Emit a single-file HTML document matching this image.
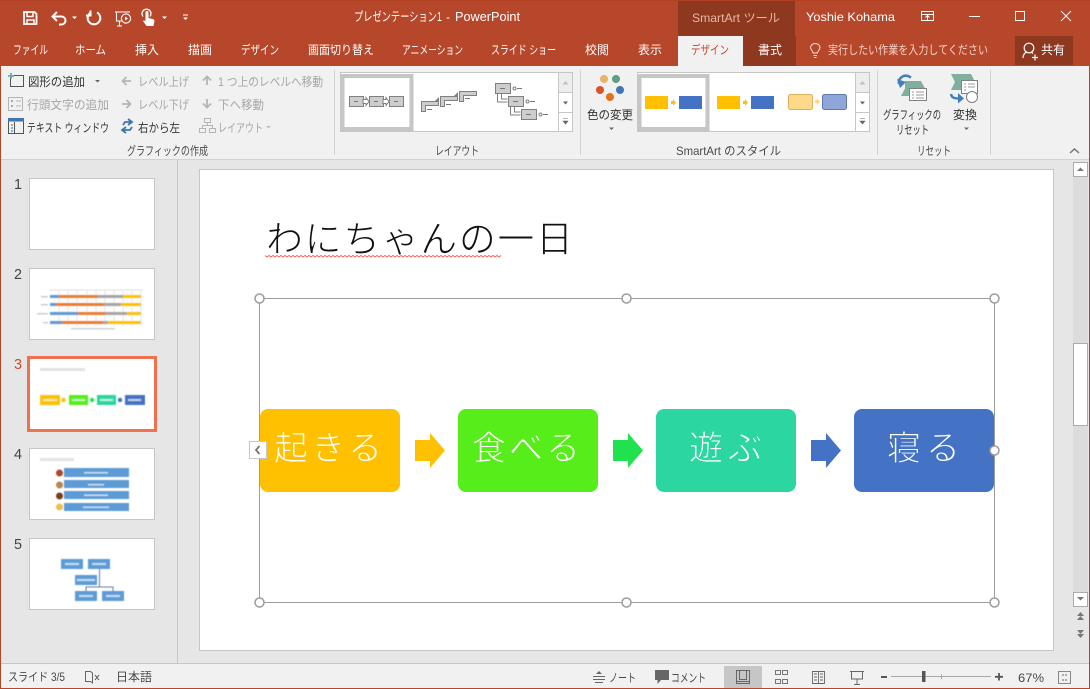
<!DOCTYPE html>
<html lang="ja"><head><meta charset="utf-8"><title>PowerPoint</title>
<style>
html,body{margin:0;padding:0;background:#e6e6e6;width:1090px;height:689px;overflow:hidden}
svg{display:block}
text{font-family:"Liberation Sans","Noto Sans CJK JP",sans-serif;font-size:12px;fill:#4a4a4a;white-space:pre}
.w text,text.w{fill:#fff}
.g text,text.g{fill:#a6a6a6}
.d text,text.d{fill:#333}
</style></head><body>
<svg width="1090" height="689" viewBox="0 0 1090 689" xmlns="http://www.w3.org/2000/svg">
<defs>
<filter id="b" x="-5%" y="-5%" width="110%" height="110%"><feGaussianBlur stdDeviation="0.45"/></filter>
<clipPath id="sq"><rect x="265" y="250" width="236" height="12"/></clipPath>
</defs>
<!-- backgrounds -->
<rect width="1090" height="689" fill="#B7472A"/>
<rect width="1090" height="1" fill="#B13F22"/>
<rect x="1" y="66" width="1088" height="93" fill="#F1F1F1"/>
<rect x="1" y="159" width="1088" height="1" fill="#D2D2D2"/>
<rect x="1" y="160" width="1088" height="504" fill="#E6E6E6"/>
<rect x="1" y="664" width="1088" height="24" fill="#F1F1F1"/>
<rect x="1" y="663" width="1088" height="1" fill="#C6C6C6"/>
<rect x="177" y="160" width="1" height="503" fill="#C6C6C6"/>
<!-- tool tabs -->
<rect x="678" y="1" width="117" height="35" fill="#8F3820"/>
<rect x="743" y="36" width="53" height="30" fill="#8F3820"/>
<rect x="678" y="36" width="65" height="30" fill="#F1F1F1"/>
<rect x="1015" y="36" width="58" height="29" fill="#8F3820"/>
<!-- QAT icons -->
<g fill="none" stroke="#fff" stroke-width="1.6">
<path d="M24 12h10.500l2 2v10h-12.500z" stroke-width="1.800"/>
<path d="M27 12.500v4h6v-4M27 24v-4h7v4" stroke-width="1.500"/>
<path d="M54 16.500h7.500a4 4 0 0 1 0 8h-2.500M57 12l-4.500 4.500 4.500 4.500" stroke-width="2"/>
<path d="M97 12.500a6.300 6.300 0 1 1-6 0M90.500 10.500v5h-4.500" stroke-width="2"/>
<path d="M115 12h15M116.500 12v9h6M122 26h-5M119.500 21v5" stroke-width="1.100"/>
<circle cx="126" cy="18.500" r="4.600" stroke-width="1.100"/>
<path d="M143 16.500a4.500 4.500 0 1 1 7 0" stroke-width="1.300"/>
</g>
<path d="M125 16.500l3 2-3 2z" fill="#fff"/>
<path d="M145.500 12.500a1.500 1.500 0 0 1 3 0v5.500l5 1.200 1 1.300-1 5.500h-7l-3.500-5 1 -.8 1.500 1z" fill="#fff"/>
<path d="M72 16.500h5l-2.500 2.500zM162 16.500h5l-2.500 2.500zM183 17.500h5l-2.500 2.500z" fill="#fff"/>
<rect x="183" y="14.500" width="5" height="1" fill="#fff"/>
<!-- title -->
<g class="w">
<text x="354" y="21" textLength="88" lengthAdjust="spacingAndGlyphs" style="font-size:12.500px">プレゼンテーション1</text>
<text x="446" y="21" style="font-size:12px">-</text>
<text x="455" y="21" textLength="65" lengthAdjust="spacingAndGlyphs" style="font-size:12.500px">PowerPoint</text>
<text x="806" y="21" textLength="89" lengthAdjust="spacingAndGlyphs">Yoshie Kohama</text>
</g>
<text x="692" y="22" textLength="88" lengthAdjust="spacingAndGlyphs" style="fill:#E9B7A6">SmartArt ツール</text>
<g fill="none" stroke="#fff" stroke-width="1">
<path d="M921.500 11.500h12v9h-12zM921.500 14.500h12M927.500 20v-4M925.500 17.500l2-2 2 2"/>
<path d="M969 16.500h11"/>
<path d="M1015.500 11.500h9v9h-9z"/>
<path d="M1061 11l10 10M1071 11l-10 10"/>
</g>
<!-- tabs -->
<g class="w">
<text x="13" y="54" textLength="35" lengthAdjust="spacingAndGlyphs">ファイル</text>
<text x="75" y="54" textLength="31" lengthAdjust="spacingAndGlyphs">ホーム</text>
<text x="135" y="54" textLength="24" lengthAdjust="spacingAndGlyphs">挿入</text>
<text x="188" y="54" textLength="24" lengthAdjust="spacingAndGlyphs">描画</text>
<text x="241" y="54" textLength="38" lengthAdjust="spacingAndGlyphs">デザイン</text>
<text x="308" y="54" textLength="66" lengthAdjust="spacingAndGlyphs">画面切り替え</text>
<text x="402" y="54" textLength="61" lengthAdjust="spacingAndGlyphs">アニメーション</text>
<text x="491" y="54" textLength="65" lengthAdjust="spacingAndGlyphs">スライド ショー</text>
<text x="585" y="54" textLength="24" lengthAdjust="spacingAndGlyphs">校閲</text>
<text x="638" y="54" textLength="24" lengthAdjust="spacingAndGlyphs">表示</text>
<text x="758" y="54" textLength="24" lengthAdjust="spacingAndGlyphs">書式</text>
<text x="1041" y="54" textLength="24" lengthAdjust="spacingAndGlyphs">共有</text>
</g>
<text x="691" y="54" textLength="38" lengthAdjust="spacingAndGlyphs" style="fill:#C8442A">デザイン</text>
<text x="828" y="54" textLength="160" lengthAdjust="spacingAndGlyphs" style="fill:#F3D3C8">実行したい作業を入力してください</text>
<g fill="none" stroke="#F7E3DB" stroke-width="1">
<path d="M813 53c0-2-2.500-3-2.500-6a5 5 0 0 1 9.500 0c0 3-2.500 4-2.500 6zM813.500 55.500h3.500M814 57.500h2.500"/>
</g>
<g fill="none" stroke="#fff" stroke-width="1.200">
<circle cx="1029" cy="48" r="4.800"/>
<path d="M1023 58c0-3.500 2-5.500 4-6M1031 52l2 1.500M1032 57.500h6M1035 54.500v6"/>
</g>
<!-- ribbon separators -->
<g fill="#D2D2D2">
<rect x="334" y="70" width="1" height="85"/><rect x="580" y="70" width="1" height="85"/>
<rect x="877" y="70" width="1" height="85"/><rect x="990" y="70" width="1" height="85"/>
</g>
<!-- group 1 -->
<g fill="none">
<path d="M10.500 77.500v9h13v-11h-10" stroke="#555"/>
<path d="M8 76h6M11 73v6" stroke="#5FA58F" stroke-width="1.600"/>
<path d="M8.500 97.500h14v13h-14z" stroke="#B5B5B5"/>
<path d="M16 101h5M16 106h5" stroke="#B5B5B5"/>
<path d="M11 101h2M11 106h2" stroke="#A8A8A8" stroke-width="2"/>
<path d="M8.500 120.500h15v13h-15z" stroke="#555"/>
<path d="M11 125h2M11 128h2M11 131h2" stroke="#2B6CA8"/>
<path d="M14.500 122v11" stroke="#555"/>
</g>
<rect x="8" y="118" width="16" height="3.500" fill="#3F75AE"/>
<text class="d" x="28" y="86" textLength="57" lengthAdjust="spacingAndGlyphs">図形の追加</text>
<path d="M95 80h5l-2.500 2.500z" fill="#666"/>
<text class="g" x="27" y="109" textLength="82" lengthAdjust="spacingAndGlyphs">行頭文字の追加</text>
<text class="d" x="27" y="132" textLength="82" lengthAdjust="spacingAndGlyphs">テキスト ウィンドウ</text>
<g class="g">
<text x="138" y="86" textLength="51" lengthAdjust="spacingAndGlyphs">レベル上げ</text>
<text x="138" y="109" textLength="51" lengthAdjust="spacingAndGlyphs">レベル下げ</text>
<text x="218" y="86" textLength="105" lengthAdjust="spacingAndGlyphs">1 つ上のレベルへ移動</text>
<text x="218" y="109" textLength="46" lengthAdjust="spacingAndGlyphs">下へ移動</text>
<text x="218" y="132" textLength="45" lengthAdjust="spacingAndGlyphs">レイアウト</text>
</g>
<text class="d" x="138" y="132" textLength="42" lengthAdjust="spacingAndGlyphs">右から左</text>
<g fill="none" stroke="#B5B5B5" stroke-width="1.800">
<path d="M131 81h-8M126.500 77l-4 4 4 4"/>
<path d="M122 104h8M126.500 100l4 4-4 4"/>
<path d="M207 85v-8M203 80.500l4-4 4 4"/>
<path d="M207 99v8M203 103.500l4 4 4-4"/>
</g>
<g fill="none" stroke="#3F75AE" stroke-width="2">
<path d="M132 122h-7l-2 3M128 119l4 3-4 3" stroke-width="1.800"/>
<path d="M123 130h7l2-3M126 127l-4 3 4 3" stroke-width="1.800"/>
</g>
<g fill="none" stroke="#B5B5B5">
<path d="M204.500 118.500h6v4h-6zM199.500 128.500h6v4h-6zM209.500 128.500h6v4h-6zM207.500 122.500v3M202.500 128v-2.500h10v2.500"/>
</g>
<path d="M266 126h5l-2.500 2.500z" fill="#C0C0C0"/>
<text x="127" y="155" textLength="81" lengthAdjust="spacingAndGlyphs">グラフィックの作成</text>
<!-- layout gallery -->
<rect x="340.500" y="72.500" width="232" height="59" fill="#fff" stroke="#C6C6C6"/>
<rect x="342.500" y="76" width="69" height="53" fill="#fff" stroke="#C6C6C6" stroke-width="4"/>
<g fill="#CDCDCD" stroke="#808080">
<rect x="349.500" y="96.500" width="14" height="10"/><rect x="369.500" y="96.500" width="14" height="10"/><rect x="389.500" y="96.500" width="14" height="10"/>
<path d="M363 99.500h3v-2l3 4-3 4v-2h-3zM383 99.500h3v-2l3 4-3 4v-2h-3z" fill="#fff"/>
<path d="M421.500 101.500h17v4h-13v6h-4zM440.500 96.500h17v4h-13v6h-4zM459.500 91.500h17v4h-13v6h-4z"/>
<rect x="495.500" y="83.500" width="15" height="10"/><rect x="508.500" y="96.500" width="15" height="10"/><rect x="521.500" y="109.500" width="15" height="10"/>
</g>
<path d="M354 101.500h4M374 101.500h4M394 101.500h4M427 109.500h5M446 104.500h5M465 98.500h5M500 88.500h5M513 101.500h5M526 114.500h5M517 88.500h5M530 101.500h5M543 114.500h5" stroke="#777" fill="none"/>
<path d="M435 101l4-4v4zM454 96l4-4v4z" fill="#808080"/>
<circle cx="514.500" cy="88.500" r="1.500" fill="#fff" stroke="#808080"/><circle cx="527.500" cy="101.500" r="1.500" fill="#fff" stroke="#808080"/><circle cx="540.500" cy="114.500" r="1.500" fill="#fff" stroke="#808080"/>
<path d="M497.500 94v8h10M501.500 94v5h6M510.500 107v8h10M514.500 107v5h6" stroke="#808080" fill="none"/>
<rect x="558.500" y="72.500" width="14" height="20" fill="#EDEDED" stroke="#C6C6C6"/>
<rect x="558.500" y="92.500" width="14" height="20" fill="#fff" stroke="#C6C6C6"/>
<rect x="558.500" y="112.500" width="14" height="19" fill="#fff" stroke="#C6C6C6"/>
<path d="M562.500 84.500h6l-3-3.500z" fill="#C0C0C0"/><path d="M563 101.500h5l-2.500 3z" fill="#666"/>
<path d="M563 118.500h5M563 121h5l-2.500 3z" fill="#666" stroke="#666" stroke-width=".6"/>
<text x="435" y="155" textLength="44" lengthAdjust="spacingAndGlyphs">レイアウト</text>
<!-- color -->
<circle cx="604" cy="79" r="4" fill="#E8B566"/><circle cx="616" cy="79" r="4" fill="#5E9E86"/>
<circle cx="600" cy="90" r="4" fill="#D9532E"/><circle cx="620" cy="90" r="4" fill="#3F75B5"/>
<circle cx="610" cy="97" r="4" fill="#E5701E"/>
<text class="d" x="587" y="119" textLength="46" lengthAdjust="spacingAndGlyphs">色の変更</text>
<path d="M609 127.500h5l-2.500 2.500z" fill="#666"/>
<!-- style gallery -->
<rect x="637.500" y="72.500" width="232" height="59" fill="#fff" stroke="#C6C6C6"/>
<rect x="639.500" y="76" width="68" height="53" fill="#fff" stroke="#C6C6C6" stroke-width="4"/>
<rect x="645" y="96" width="23" height="13" fill="#FFC000"/><rect x="679" y="96" width="23" height="13" fill="#4472C4"/>
<path d="M671 101h2v-2l3 3.500-3 3.500v-2h-2z" fill="#FFC000"/>
<rect x="717" y="96" width="23" height="13" fill="#FFC000"/><rect x="751" y="96" width="23" height="13" fill="#4472C4"/>
<path d="M743 101h2v-2l3 3.500-3 3.500v-2h-2z" fill="#FFC000"/>
<rect x="788.500" y="94.500" width="24" height="15" rx="2" fill="#FFD98A" stroke="#D8B060"/>
<rect x="822.500" y="94.500" width="24" height="15" rx="2" fill="#8FA6D8" stroke="#5F78AE"/>
<path d="M815 100h2v-2l3 3.500-3 3.500v-2h-2z" fill="#FFD88A"/>
<rect x="855.500" y="72.500" width="14" height="20" fill="#EDEDED" stroke="#C6C6C6"/>
<rect x="855.500" y="92.500" width="14" height="20" fill="#fff" stroke="#C6C6C6"/>
<rect x="855.500" y="112.500" width="14" height="19" fill="#fff" stroke="#C6C6C6"/>
<path d="M859.500 84.500h6l-3-3.500z" fill="#C0C0C0"/><path d="M860 101.500h5l-2.500 3z" fill="#666"/>
<path d="M860 118.500h5M860 121h5l-2.500 3z" fill="#666" stroke="#666" stroke-width=".6"/>
<text x="676" y="155" textLength="105" lengthAdjust="spacingAndGlyphs">SmartArt のスタイル</text>
<!-- reset group -->
<path d="M905 81h16l4 7.500-4 7.500h-20l4-7.500z" fill="#7FAF9F"/>
<rect x="909.500" y="88.500" width="17" height="12" fill="#fff" stroke="#808080"/>
<path d="M912 92h2M916 92h8M912 95h2M916 95h8M912 98h2M916 98h8" stroke="#9A9A9A" fill="none"/>
<path d="M899 84a7 7 0 0 1 9-8l3 1.500" fill="none" stroke="#3F7FBF" stroke-width="2.500"/>
<path d="M897 79l3 9 6-6z" fill="#3F7FBF"/>
<text class="d" x="883" y="119" textLength="58" lengthAdjust="spacingAndGlyphs">グラフィックの</text>
<text class="d" x="896" y="134" textLength="33" lengthAdjust="spacingAndGlyphs">リセット</text>
<path d="M951 74h20l4 8-4 8h-20l4-8z" fill="#7FAF9F"/>
<rect x="961.500" y="80.500" width="16" height="13" fill="#fff" stroke="#808080"/>
<path d="M964 84h2M968 84h7M964 87h2M968 87h7M964 90h2" stroke="#9A9A9A" fill="none"/>
<circle cx="972" cy="97" r="5.500" fill="#fff" stroke="#808080"/>
<path d="M951 94c.5 3.500 3 4.500 8 4.500" fill="none" stroke="#3F7FBF" stroke-width="2.500"/>
<path d="M958 93l6 5.500-6 5z" fill="#3F7FBF"/>
<text class="d" x="953" y="119" textLength="24" lengthAdjust="spacingAndGlyphs">変換</text>
<path d="M964 127.500h5l-2.500 2.500z" fill="#666"/>
<text x="917" y="155" textLength="34" lengthAdjust="spacingAndGlyphs">リセット</text>
<path d="M1070 153l4.500-4 4.500 4" fill="none" stroke="#777" stroke-width="1.500"/>
<!-- thumbnails -->
<text x="14" y="189" textLength="8" lengthAdjust="spacingAndGlyphs" style="font-size:15px;fill:#444">1</text>
<text x="14" y="279" textLength="8" lengthAdjust="spacingAndGlyphs" style="font-size:15px;fill:#444">2</text>
<text x="14" y="369" textLength="8" lengthAdjust="spacingAndGlyphs" style="font-size:15px;fill:#D24726">3</text>
<text x="14" y="459" textLength="8" lengthAdjust="spacingAndGlyphs" style="font-size:15px;fill:#444">4</text>
<text x="14" y="549" textLength="8" lengthAdjust="spacingAndGlyphs" style="font-size:15px;fill:#444">5</text>
<g fill="#fff" stroke="#C6C6C6">
<rect x="29.500" y="178.500" width="125" height="71"/>
<rect x="29.500" y="268.500" width="125" height="71"/>
<rect x="29.500" y="448.500" width="125" height="71"/>
<rect x="29.500" y="538.500" width="125" height="71"/>
</g>
<rect x="28.500" y="357.500" width="127" height="73" fill="#fff" stroke="#F07050" stroke-width="3"/>
<g filter="url(#b)">
<!-- thumb 2 -->
<path d="M59 291v35M68 291v35M77 291v35M87 291v35M96 291v35M105 291v35M114 291v35M123 291v35M132 291v35M141 291v35" stroke="#E4E4E4" fill="none"/>
<g fill="#5B9BD5"><rect x="50" y="295" width="9" height="3"/><rect x="50" y="303" width="6" height="3"/><rect x="50" y="312" width="28" height="3"/><rect x="50" y="321" width="12" height="3"/></g>
<g fill="#ED7D31"><rect x="59" y="295" width="39" height="3"/><rect x="56" y="303" width="48" height="3"/><rect x="78" y="312" width="28" height="3"/><rect x="62" y="321" width="41" height="3"/></g>
<g fill="#A5A5A5"><rect x="98" y="295" width="25" height="3"/><rect x="104" y="303" width="17" height="3"/><rect x="106" y="312" width="21" height="3"/><rect x="103" y="321" width="5" height="3"/></g>
<g fill="#FFC000"><rect x="123" y="295" width="18" height="3"/><rect x="121" y="303" width="20" height="3"/><rect x="127" y="312" width="14" height="3"/><rect x="108" y="321" width="33" height="3"/></g>
<rect x="71" y="328" width="44" height="1.500" fill="#D0D0D0"/>
<rect x="41" y="296" width="7" height="1.500" fill="#CCC"/><rect x="41" y="304" width="7" height="1.500" fill="#CCC"/><rect x="37" y="313" width="11" height="1.500" fill="#CCC"/><rect x="43" y="322" width="5" height="1.500" fill="#CCC"/>
<rect x="49" y="289.500" width="94" height="1" fill="#E0E0E0"/>
<!-- thumb 3 -->
<rect x="40" y="368" width="45" height="3" fill="#E2E2E2"/>
<rect x="40" y="395" width="20" height="10" fill="#FFC000"/><rect x="69" y="395" width="19" height="10" fill="#56ED1A"/><rect x="97" y="395" width="19" height="10" fill="#2CD6A0"/><rect x="125" y="395" width="20" height="10" fill="#4472C4"/>
<rect x="43" y="399" width="14" height="2" fill="#FFE9A8"/><rect x="72" y="399" width="13" height="2" fill="#C8F8B0"/><rect x="100" y="399" width="13" height="2" fill="#BDF0DF"/><rect x="128" y="399" width="13" height="2" fill="#C5D3EC"/>
<circle cx="63.500" cy="400" r="2.200" fill="#FFC000"/><circle cx="92" cy="400" r="2.200" fill="#20E24F"/><circle cx="120" cy="400" r="2.200" fill="#4472C4"/>
<!-- thumb 4 -->
<rect x="40" y="458" width="34" height="3" fill="#E2E2E2"/>
<g fill="#5B9BD5"><rect x="64" y="468" width="65" height="9"/><rect x="64" y="480" width="65" height="8"/><rect x="64" y="491" width="65" height="8"/><rect x="64" y="503" width="65" height="8"/></g>
<circle cx="59.500" cy="473" r="3.500" fill="#A8492C"/><circle cx="59.500" cy="485" r="3.500" fill="#B48A4E"/><circle cx="59.500" cy="496" r="3.500" fill="#7A3E1E"/><circle cx="59.500" cy="507" r="3.500" fill="#E8C24E"/>
<g fill="#C6DDF2"><rect x="84" y="472" width="24" height="1.500"/><rect x="88" y="484" width="16" height="1.500"/><rect x="84" y="494.500" width="24" height="1.500"/><rect x="83" y="506.500" width="26" height="1.500"/></g>
<!-- thumb 5 -->
<g fill="#5B9BD5"><rect x="61" y="559" width="22" height="10"/><rect x="88" y="559" width="22" height="10"/><rect x="75" y="575" width="22" height="10"/><rect x="75" y="591" width="22" height="10"/><rect x="102" y="591" width="22" height="10"/></g>
<path d="M99.500 569v18M86 591v-4h27v4" stroke="#5B7FA5" fill="none"/>
<g fill="#C6DDF2"><rect x="65" y="563" width="14" height="2"/><rect x="92" y="563" width="14" height="2"/><rect x="77" y="579" width="18" height="2"/><rect x="79" y="595" width="14" height="2"/><rect x="106" y="595" width="14" height="2"/></g>
</g>
<!-- slide -->
<rect x="199.500" y="169.500" width="854" height="481" fill="#fff" stroke="#C6C6C6"/>
<text x="266" y="252" textLength="307" lengthAdjust="spacing" style="font-size:37px;fill:#111;stroke:#fff;stroke-width:1px">わにちゃんの一日</text>
<g clip-path="url(#sq)"><path d="M265 255.500l2 1.500 2-1.500 2 1.500 2-1.500 2 1.500 2-1.500 2 1.500 2-1.500 2 1.500 2-1.500 2 1.500 2-1.500 2 1.500 2-1.500 2 1.500 2-1.500 2 1.500 2-1.500 2 1.500 2-1.500 2 1.500 2-1.500 2 1.500 2-1.500 2 1.500 2-1.500 2 1.500 2-1.500 2 1.500 2-1.500 2 1.500 2-1.500 2 1.500 2-1.500 2 1.500 2-1.500 2 1.500 2-1.500 2 1.500 2-1.500 2 1.500 2-1.500 2 1.500 2-1.500 2 1.500 2-1.500 2 1.500 2-1.500 2 1.500 2-1.500 2 1.500 2-1.500 2 1.500 2-1.500 2 1.500 2-1.500 2 1.500 2-1.500 2 1.500 2-1.500 2 1.500 2-1.500 2 1.500 2-1.500 2 1.500 2-1.500 2 1.500 2-1.500 2 1.500 2-1.500 2 1.500 2-1.500 2 1.500 2-1.500 2 1.500 2-1.500 2 1.500 2-1.500 2 1.500 2-1.500 2 1.500 2-1.500 2 1.500 2-1.500 2 1.500 2-1.500 2 1.500 2-1.500 2 1.500 2-1.500 2 1.500 2-1.500 2 1.500 2-1.500 2 1.500 2-1.500 2 1.500 2-1.500 2 1.500 2-1.500 2 1.500 2-1.500 2 1.500 2-1.500 2 1.500 2-1.500 2 1.500 2-1.500 2 1.500 2-1.500 2 1.500 2-1.500 2 1.500 2-1.500 2 1.500 2-1.500 2 1.500 2-1.500 2 1.500" fill="none" stroke="#F06060" stroke-width="1"/></g>
<!-- diagram -->
<rect x="259.500" y="298.500" width="735" height="304" fill="none" stroke="#9C9C9C"/>
<rect x="260" y="409" width="140" height="83" rx="8" fill="#FFC000"/>
<rect x="458" y="409" width="140" height="83" rx="8" fill="#56ED1A"/>
<rect x="656" y="409" width="140" height="83" rx="8" fill="#2CD6A0"/>
<rect x="854" y="409" width="140" height="83" rx="8" fill="#4472C4"/>
<path d="M415 440h15v-7l15 17.500-15 17.500v-7h-15z" fill="#FFC000"/>
<path d="M613 440h15v-7l15 17.500-15 17.500v-7h-15z" fill="#20E24F"/>
<path d="M811 440h15v-7l15 17.500-15 17.500v-7h-15z" fill="#4472C4"/>
<text x="274" y="460" textLength="108" lengthAdjust="spacing" style="font-size:34px;fill:#fff;stroke:#FFC000;stroke-width:.9px">起きる</text>
<text x="472" y="460" textLength="108" lengthAdjust="spacing" style="font-size:34px;fill:#fff;stroke:#56ED1A;stroke-width:.9px">食べる</text>
<text x="689" y="460" textLength="73" lengthAdjust="spacing" style="font-size:34px;fill:#fff;stroke:#2CD6A0;stroke-width:.9px">遊ぶ</text>
<text x="887" y="460" textLength="73" lengthAdjust="spacing" style="font-size:34px;fill:#fff;stroke:#4472C4;stroke-width:.9px">寝る</text>
<rect x="249.500" y="441.500" width="17" height="17" fill="#fff" stroke="#C6C6C6"/>
<path d="M259.500 446l-3.500 4 3.500 4" fill="none" stroke="#777" stroke-width="1.800"/>
<g fill="#fff" stroke="#9C9C9C" stroke-width="1.500">
<circle cx="259.500" cy="298.500" r="4.500"/><circle cx="626.500" cy="298.500" r="4.500"/><circle cx="994.500" cy="298.500" r="4.500"/>
<circle cx="259.500" cy="602.500" r="4.500"/><circle cx="626.500" cy="602.500" r="4.500"/><circle cx="994.500" cy="602.500" r="4.500"/>
<circle cx="994.500" cy="450.500" r="4.500"/>
</g>
<!-- scrollbar -->
<rect x="1073" y="162" width="15" height="445" fill="#DCDCDC"/>
<rect x="1073.500" y="162.500" width="14" height="14" fill="#fff" stroke="#ABABAB"/>
<rect x="1073.500" y="343.500" width="14" height="82" fill="#fff" stroke="#ABABAB"/>
<rect x="1073.500" y="592.500" width="14" height="14" fill="#fff" stroke="#ABABAB"/>
<path d="M1077 171h7l-3.500-3.500zM1077 597h7l-3.500 3.500z" fill="#777"/>
<path d="M1077 616h7l-3.500-4zM1077 620h7l-3.500-4zM1077 630h7l-3.500 4zM1077 634h7l-3.500 4z" fill="#777"/>
<!-- status bar -->
<rect x="724" y="666" width="38" height="22" fill="#C6C6C6"/>
<text x="8" y="681" textLength="57" lengthAdjust="spacingAndGlyphs">スライド 3/5</text>
<text x="116" y="681" textLength="36" lengthAdjust="spacingAndGlyphs">日本語</text>
<path d="M85.500 671.500h5l2 1.500v10l-2-1.500h-5z" fill="none" stroke="#666"/>
<path d="M95 675l4 5M99 675l-4 5" stroke="#555" fill="none"/>
<text x="609" y="682" textLength="27" lengthAdjust="spacingAndGlyphs">ノート</text>
<text x="671" y="682" textLength="35" lengthAdjust="spacingAndGlyphs">コメント</text>
<path d="M593 676.500h12M593 679.500h12M595 682.500h8" stroke="#666" fill="none"/>
<path d="M596 674h6l-3-3z" fill="#666"/>
<path d="M655 670h14v10h-8l-3.500 4v-4h-2.500z" fill="#666"/>
<g fill="none" stroke="#666">
<path d="M736.500 670.500h13v13h-13zM739.500 670.500v9h7v-9M736.500 681.500h13"/>
<path d="M775.500 670.500h5v4h-5zM782.500 670.500h5v4h-5zM775.500 679.500h5v4h-5zM782.500 679.500h5v4h-5z" stroke="#777"/>
<path d="M812.500 671.500h12v12h-12zM818.500 671.500v12M814 674h3M814 677h3M814 680h3M820 674h3M820 677h3M820 680h3" stroke-width=".9"/>
<path d="M850 671.500h14M851.500 672v7h11v-7M857 679v5M854 684.500h6"/>
<path d="M891 676.500h100" stroke="#A8A8A8"/>
<path d="M941.500 674v5" stroke="#A8A8A8"/>
</g>
<rect x="922" y="671" width="3.500" height="11" fill="#555"/>
<rect x="881" y="676" width="6" height="2" fill="#555"/>
<path d="M999 673v7.500M995 676.800h8" stroke="#555" stroke-width="1.800" fill="none"/>
<text x="1018" y="682" textLength="26" lengthAdjust="spacingAndGlyphs">67%</text>
<path d="M1058.500 671.500h12v12h-12z" fill="none" stroke="#888"/>
<path d="M1062 675h2M1065 675h2M1062 680h2M1065 680h2" stroke="#666" fill="none"/>
</svg>
</body></html>
